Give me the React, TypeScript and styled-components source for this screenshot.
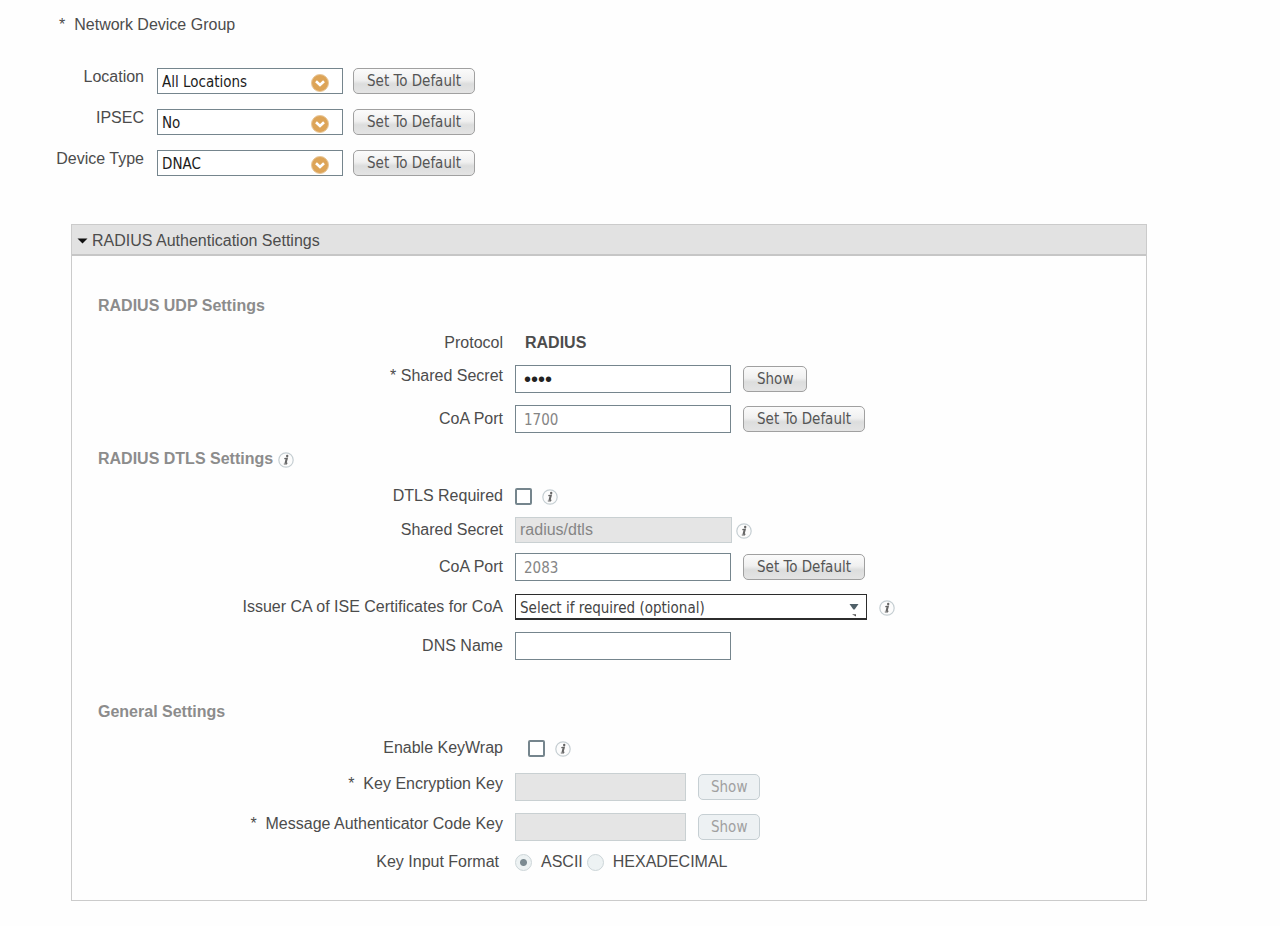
import React, { useState } from "react";
import type { ReactNode } from "react";
import styled, { createGlobalStyle, css } from "styled-components";

const labelFont = '"Liberation Sans", Arial, sans-serif';
const controlFont = '"DejaVu Sans Condensed", Tahoma, sans-serif';

const GlobalStyle = createGlobalStyle`
  *, *::before, *::after { box-sizing: border-box; }
  body {
    margin: 0;
    background: #fefefe;
    color: #4c4c4c;
    font: 16px/18px ${labelFont};
  }
`;

const Page = styled.main`
  padding: 16px 133px 25px 59px;
`;

const GroupTitle = styled.h2`
  display: flex;
  gap: 9px;
  margin: 0 0 34px;
  font-size: 16px;
  font-weight: 400;
`;

const DeviceGroup = styled.section`
  display: grid;
  gap: 15px;
  margin-bottom: 48px;
`;

const DeviceRow = styled.div`
  display: grid;
  grid-template-columns: 88px 186px auto;
  column-gap: 10px;
  justify-content: start;
  align-items: start;
  height: 26px;
`;

const DeviceLabel = styled.label`
  justify-self: end;
  padding-right: 3px;
  white-space: nowrap;
`;

const SelectBox = styled.div<{ $wide?: boolean }>`
  position: relative;
  width: ${(p) => (p.$wide ? "352px" : "186px")};
`;

const Select = styled.select<{ $strong?: boolean }>`
  display: block;
  appearance: none;
  width: 100%;
  height: 26px;
  margin: 0;
  padding: 2px 36px 0 4px;
  border: 1px solid ${(p) => (p.$strong ? "#2c2c2c" : "#75858d")};
  border-bottom-width: ${(p) => (p.$strong ? 2 : 1)}px;
  border-radius: 0;
  background: #fff;
  color: ${(p) => (p.$strong ? "#444" : "#1c1c1c")};
  font: 15px ${controlFont};
`;

const OrangeMark = styled.svg`
  position: absolute;
  right: 14px;
  top: 6px;
  pointer-events: none;
`;

const ArrowMark = styled.svg`
  position: absolute;
  right: 8px;
  top: 9px;
  pointer-events: none;
`;

const Button = styled.button`
  height: 26px;
  padding: 0 13px;
  border: 1px solid #a0a0a0;
  border-radius: 5px;
  background: linear-gradient(#fbfbfb 0%, #f0f0f0 46%, #dcdddd 62%, #e4e4e4 100%);
  color: #555;
  font: 15px ${controlFont};
  white-space: nowrap;

  &:disabled {
    padding: 0 12px;
    border-color: #c6cfd3;
    background: #edf1f3;
    color: #a0a0a0;
  }
`;

const Panel = styled.section`
  margin-left: 12px;
  border: 1px solid #cbcbcb;
`;

const PanelHeader = styled.h2`
  margin: 0;
  border-bottom: 2px solid #c6c6c6;
  background: #e2e2e2;
  font-size: 16px;
  font-weight: 400;
`;

const PanelToggle = styled.button`
  display: flex;
  align-items: center;
  gap: 4px;
  width: 100%;
  height: 29px;
  padding: 2px 6px 0 5px;
  border: 0;
  background: none;
  color: #4c4c4c;
  font: 16px ${labelFont};
`;

const PanelBody = styled.div`
  padding: 41px 26px 29px 0;
`;

const SectionTitle = styled.h3<{ $before?: number }>`
  display: flex;
  align-items: center;
  gap: 5px;
  margin: ${(p) => p.$before ?? 0}px 0 0 26px;
  color: #8c8c8c;
  font-size: 16px;
  line-height: 18px;
`;

const Row = styled.div<{ $before: number; $raised?: boolean }>`
  display: grid;
  grid-template-columns: 431px auto;
  justify-content: start;
  align-items: ${(p) => (p.$raised ? "start" : "center")};
  column-gap: 12px;
  margin-top: ${(p) => p.$before}px;
`;

const labelStyle = css`
  text-align: right;
  white-space: pre;
`;

const RowLabel = styled.label<{ $raised?: boolean }>`
  ${labelStyle}
  padding-top: ${(p) => (p.$raised ? 2 : 0)}px;
`;

const RowCaption = styled.span<{ $inset?: boolean }>`
  ${labelStyle}
  padding-right: ${(p) => (p.$inset ? 4 : 0)}px;
`;

const Controls = styled.div<{ $gap?: number; $indent?: number }>`
  display: flex;
  align-items: center;
  gap: ${(p) => p.$gap ?? 12}px;
  padding-left: ${(p) => p.$indent ?? 0}px;
`;

const Input = styled.input<{ $size?: "key" | "dtls" }>`
  width: ${(p) => (p.$size === "key" ? 171 : p.$size === "dtls" ? 217 : 216)}px;
  height: ${(p) => (p.$size === "dtls" ? 26 : 28)}px;
  margin: 0;
  padding: 2px 8px 0;
  border: 1px solid #75858d;
  border-radius: 0;
  background: #fff;
  color: #858585;
  font: 15px ${controlFont};

  &[type="password"] {
    padding-top: 0;
    color: #222;
    font: 20px ${labelFont};
  }

  &:disabled {
    padding: 0 4px;
    border-color: #c9d0d2;
    background: #e5e5e5;
    color: #858585;
    font: 16px ${labelFont};
  }
`;

const Checkbox = styled.input`
  appearance: none;
  width: 17px;
  height: 17px;
  margin: 0;
  border: 2px solid #75858d;
  border-radius: 2px;
  background: #fff;

  &:checked {
    background: #75858d;
    box-shadow: inset 0 0 0 2px #fff;
  }
`;

const Radio = styled.input`
  appearance: none;
  width: 17px;
  height: 17px;
  margin: 0;
  border: 1px solid #ccd5d8;
  border-radius: 50%;
  background: #edf2f3;

  &:checked {
    background: radial-gradient(circle, #7b8a91 0 3px, #edf2f3 4px);
  }
`;

const RadioGroup = styled.div`
  display: flex;
  gap: 4px;
`;

const RadioOption = styled.label`
  display: flex;
  align-items: center;
  gap: 9px;
`;

const Protocol = styled.strong`
  padding-left: 10px;
`;

const InfoSvg = styled.svg`
  display: block;
  flex: none;
  margin-top: 2px;
`;

function InfoIcon() {
  return (
    <InfoSvg width="16" height="16" viewBox="0 0 16 16" role="img" aria-label="Information">
      <circle cx="8" cy="8" r="7.2" fill="#fcfcfc" stroke="#c5ced2" strokeWidth="1.2" />
      <circle cx="9.2" cy="4" r="1.2" fill="#666" />
      <path d="M6.3 6.6 9.3 6.2 8 11.2Q8.1 11.8 9.4 11" fill="none" stroke="#666" strokeWidth="1.2" />
      <path d="M8.4 6.6 7.3 11.4" stroke="#666" strokeWidth="1.6" />
      <path d="M5.8 12h3.2" stroke="#666" strokeWidth="1" />
    </InfoSvg>
  );
}

function DeviceField({ id, label, value }: { id: string; label: string; value: string }) {
  return (
    <DeviceRow>
      <DeviceLabel htmlFor={id}>{label}</DeviceLabel>
      <SelectBox>
        <Select id={id} defaultValue={value}>
          <option>{value}</option>
        </Select>
        <OrangeMark width="18" height="18" viewBox="0 0 18 18" aria-hidden="true">
          <circle cx="9" cy="9" r="8.5" fill="#dda457" stroke="#e8c79a" strokeWidth="1" />
          <path d="M5 7.2 9 11 13 7.2" fill="none" stroke="#fff" strokeWidth="2.6" />
        </OrangeMark>
      </SelectBox>
      <Button type="button">Set To Default</Button>
    </DeviceRow>
  );
}

type FieldProps = {
  id: string;
  label: string;
  before: number;
  raised?: boolean;
  gap?: number;
  indent?: number;
  children: ReactNode;
};

function Field({ id, label, before, raised, gap, indent, children }: FieldProps) {
  return (
    <Row $before={before} $raised={raised}>
      <RowLabel htmlFor={id} $raised={raised}>{label}</RowLabel>
      <Controls $gap={gap} $indent={indent}>{children}</Controls>
    </Row>
  );
}

export default function App() {
  const [open, setOpen] = useState(true);
  const [visible, setVisible] = useState(false);

  return (
    <>
      <GlobalStyle />
      <Page>
        <GroupTitle>
          <span>*</span>
          <span>Network Device Group</span>
        </GroupTitle>
        <DeviceGroup>
          <DeviceField id="location" label="Location" value="All Locations" />
          <DeviceField id="ipsec" label="IPSEC" value="No" />
          <DeviceField id="device-type" label="Device Type" value="DNAC" />
        </DeviceGroup>

        <Panel>
          <PanelHeader>
            <PanelToggle type="button" aria-expanded={open} onClick={() => setOpen(!open)}>
              <svg width="11" height="6" viewBox="0 0 11 6" aria-hidden="true">
                <path d="M0.5 0.5H10.5L5.5 5.5Z" fill="#111" />
              </svg>
              RADIUS Authentication Settings
            </PanelToggle>
          </PanelHeader>
          {open && (
            <PanelBody>
              <SectionTitle>RADIUS UDP Settings</SectionTitle>
              <Row $before={19}>
                <RowCaption>Protocol</RowCaption>
                <Protocol>RADIUS</Protocol>
              </Row>
              <Field id="secret" label="* Shared Secret" before={13} raised>
                <Input id="secret" type={visible ? "text" : "password"} defaultValue="abcd" />
                <Button type="button" onClick={() => setVisible(!visible)}>Show</Button>
              </Field>
              <Field id="coa-port" label="CoA Port" before={12}>
                <Input id="coa-port" defaultValue="1700" />
                <Button type="button">Set To Default</Button>
              </Field>

              <SectionTitle $before={17}>
                RADIUS DTLS Settings
                <InfoIcon />
              </SectionTitle>
              <Field id="dtls" label="DTLS Required" before={19} gap={10}>
                <Checkbox id="dtls" type="checkbox" />
                <InfoIcon />
              </Field>
              <Field id="dtls-secret" label="Shared Secret" before={12} gap={4}>
                <Input id="dtls-secret" $size="dtls" defaultValue="radius/dtls" disabled />
                <InfoIcon />
              </Field>
              <Field id="dtls-port" label="CoA Port" before={10}>
                <Input id="dtls-port" defaultValue="2083" />
                <Button type="button">Set To Default</Button>
              </Field>
              <Field id="issuer" label="Issuer CA of ISE Certificates for CoA" before={13}>
                <SelectBox $wide>
                  <Select id="issuer" $strong defaultValue="Select if required (optional)">
                    <option>Select if required (optional)</option>
                  </Select>
                  <ArrowMark width="10" height="14" viewBox="0 0 10 14" aria-hidden="true">
                    <path d="M0.5 1H9.5L5.6 6.5H4.4Z" fill="#4f6068" />
                    <path d="M3 11.2H7V13.5Z" fill="#555" />
                  </ArrowMark>
                </SelectBox>
                <InfoIcon />
              </Field>
              <Field id="dns" label="DNS Name" before={12}>
                <Input id="dns" />
              </Field>

              <SectionTitle $before={43}>General Settings</SectionTitle>
              <Field id="keywrap" label="Enable KeyWrap" before={18} gap={10} indent={13}>
                <Checkbox id="keywrap" type="checkbox" />
                <InfoIcon />
              </Field>
              <Field id="kek" label="*  Key Encryption Key" before={16} raised>
                <Input id="kek" $size="key" disabled />
                <Button type="button" disabled>Show</Button>
              </Field>
              <Field id="mack" label="*  Message Authenticator Code Key" before={12} raised>
                <Input id="mack" $size="key" disabled />
                <Button type="button" disabled>Show</Button>
              </Field>
              <Row $before={12}>
                <RowCaption id="format-label" $inset>Key Input Format</RowCaption>
                <RadioGroup role="radiogroup" aria-labelledby="format-label">
                  <RadioOption>
                    <Radio type="radio" name="format" defaultChecked disabled />
                    ASCII
                  </RadioOption>
                  <RadioOption>
                    <Radio type="radio" name="format" disabled />
                    HEXADECIMAL
                  </RadioOption>
                </RadioGroup>
              </Row>
            </PanelBody>
          )}
        </Panel>
      </Page>
    </>
  );
}
